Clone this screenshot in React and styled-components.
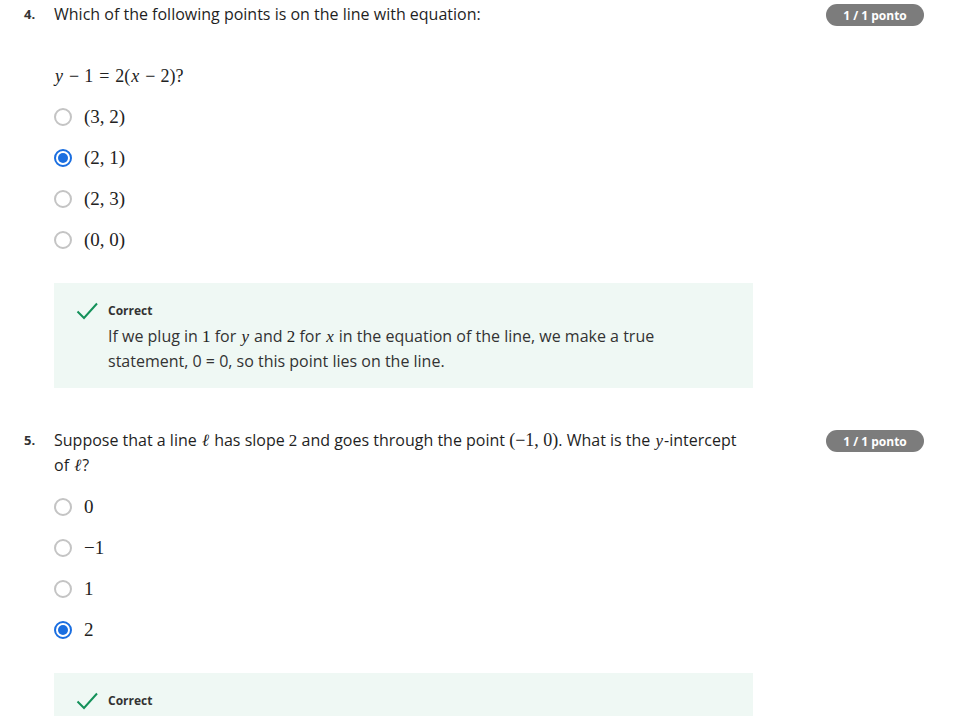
import React from "react"
import styled, { createGlobalStyle } from "styled-components"

const Global = createGlobalStyle`
  body {
    margin: 0;
    background: #ffffff;
    font-family: "Open Sans", "Liberation Sans", sans-serif;
    color: #1f1f1f;
  }
`

const Page = styled.div`
  padding: 2px 44px 0 24px;
  height: 716px;
  overflow: hidden;
`

const Question = styled.section`
  margin-bottom: ${(p) => p.gap || 0}px;
`

const Header = styled.div`
  display: flex;
  align-items: flex-start;
`

const Num = styled.div`
  width: 30px;
  flex: none;
  font-size: 13px;
  font-weight: 700;
  line-height: 25px;
  color: #333;
`

const Prompt = styled.div`
  flex: none;
  width: 696px;
  font-size: 16px;
  line-height: 25px;
  color: #1f1f1f;
`

const Badge = styled.div`
  flex: none;
  margin-left: auto;
  margin-top: 2px;
  width: 98px;
  height: 22px;
  border-radius: 11px;
  background: #7c7c7c;
  color: #fff;
  font-size: 12px;
  font-weight: 700;
  display: flex;
  align-items: center;
  justify-content: center;
`

const Body = styled.div`
  padding-left: 30px;
`

const Equation = styled.div`
  margin-top: 37px;
  font-family: "Liberation Serif", "DejaVu Serif", serif;
  font-size: 18px;
  line-height: 24px;
  color: #222;
`

const M = styled.span`
  font-family: "Liberation Serif", "DejaVu Serif", serif;
  font-size: ${(p) => p.size || 18}px;
  font-style: ${(p) => (p.i ? "italic" : "normal")};
  color: #222;
  padding: ${(p) => (p.i ? "0 1px" : "0")};
`

const Op = styled.span`
  margin: 0 ${(p) => p.space || 5}px;
`

const Options = styled.div`
  display: flex;
  flex-direction: column;
  gap: 17px;
  margin-top: ${(p) => p.top}px;
`

const Option = styled.label`
  display: flex;
  align-items: center;
  height: 24px;
  gap: 12px;
  font-family: "Liberation Serif", "DejaVu Serif", serif;
  font-size: 19px;
  color: #222;
`

const Radio = styled.span`
  width: 18px;
  height: 18px;
  box-sizing: border-box;
  border-radius: 50%;
  border: 2px solid ${(p) => (p.on ? "#1a6ee0" : "#c4c4c4")};
  display: flex;
  align-items: center;
  justify-content: center;
  &::after {
    content: "";
    width: 10px;
    height: 10px;
    border-radius: 50%;
    background: ${(p) => (p.on ? "#1a6ee0" : "transparent")};
  }
`

const Feedback = styled.div`
  margin-top: 31px;
  width: 699px;
  box-sizing: border-box;
  background: #eff8f4;
  display: flex;
  padding: 16px 24px ${(p) => p.bottom}px 22px;
  gap: 10px;
`

const Check = styled.svg`
  width: 22px;
  height: 22px;
  flex: none;
  margin-top: 1px;
`

const FbText = styled.div`
  display: flex;
  flex-direction: column;
`

const FbTitle = styled.div`
  font-size: 12px;
  font-weight: 700;
  line-height: 24px;
  color: #333;
`

const FbBody = styled.div`
  font-size: 16px;
  line-height: 25px;
  color: #333;
  margin-top: 1px;
`

const CheckIcon = () => (
  <Check viewBox="0 0 22 22">
    <path d="M1.5 11.5 L8 18 L21 3.5" fill="none" stroke="#14915a" strokeWidth="2" />
  </Check>
)

const Choice = ({ on, children }) => (
  <Option>
    <Radio on={on ? 1 : 0} />
    <span>{children}</span>
  </Option>
)

export default function App() {
  return (
    <Page>
      <Global />
      <Question gap={40}>
        <Header>
          <Num>4.</Num>
          <Prompt>Which of the following points is on the line with equation:</Prompt>
          <Badge>1 / 1 ponto</Badge>
        </Header>
        <Body>
          <Equation>
            <M i>y</M>
            <Op>−</Op>1<Op space={6}>=</Op>2(<M i>x</M>
            <Op>−</Op>2)?
          </Equation>
          <Options top={17}>
            <Choice>(3, 2)</Choice>
            <Choice on>(2, 1)</Choice>
            <Choice>(2, 3)</Choice>
            <Choice>(0, 0)</Choice>
          </Options>
          <Feedback bottom={14}>
            <CheckIcon />
            <FbText>
              <FbTitle>Correct</FbTitle>
              <FbBody>
                If we plug in <M size={17}>1</M> for <M i size={17}>y</M> and{" "}
                <M size={17}>2</M> for <M i size={17}>x</M> in the equation of the line, we make a
                true statement, 0 = 0, so this point lies on the line.
              </FbBody>
            </FbText>
          </Feedback>
        </Body>
      </Question>
      <Question>
        <Header>
          <Num>5.</Num>
          <Prompt>
            Suppose that a line <M i size={17}>ℓ</M> has slope <M size={17}>2</M> and goes through
            the point <M size={18}>(−1, 0)</M>. What is the <M i size={17}>y</M>-intercept of{" "}
            <M i size={17}>ℓ</M>?
          </Prompt>
          <Badge>1 / 1 ponto</Badge>
        </Header>
        <Body>
          <Options top={17}>
            <Choice>0</Choice>
            <Choice>−1</Choice>
            <Choice>1</Choice>
            <Choice on>2</Choice>
          </Options>
          <Feedback bottom={40}>
            <CheckIcon />
            <FbText>
              <FbTitle>Correct</FbTitle>
            </FbText>
          </Feedback>
        </Body>
      </Question>
    </Page>
  )
}
